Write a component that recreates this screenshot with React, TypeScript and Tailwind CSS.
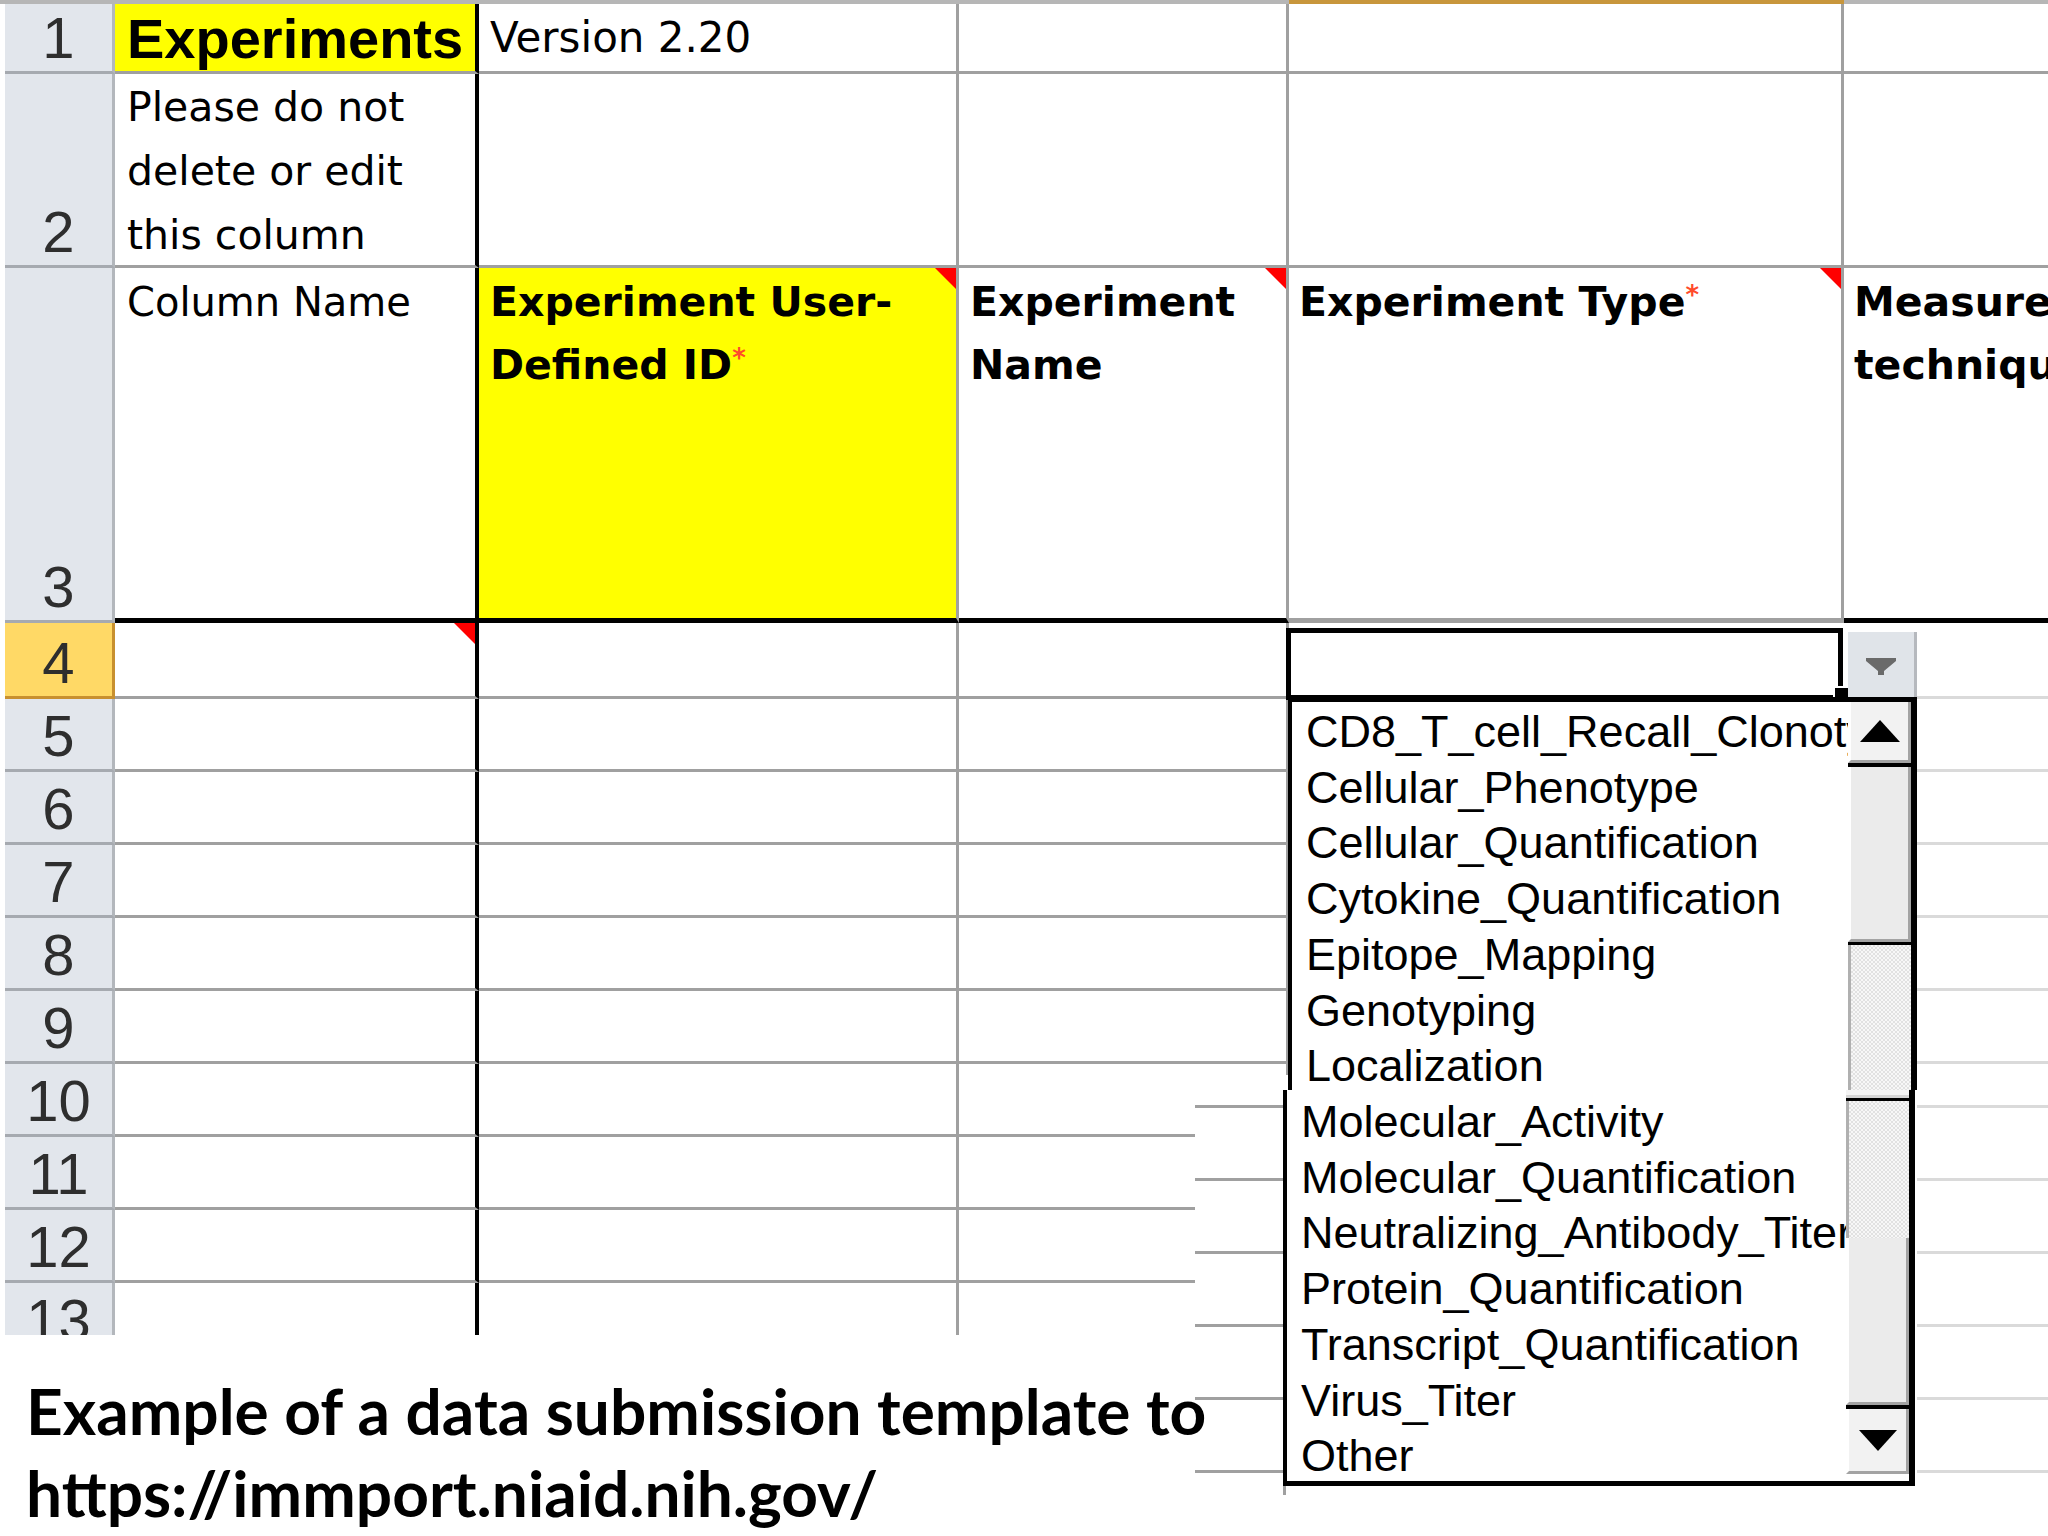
import React from "react";

const GRID = "border-[#a0a0a0]";
const CELL_FONT = "font-['DejaVu_Sans',sans-serif]";

const items = [
  "CD8_T_cell_Recall_Clonotype",
  "Cellular_Phenotype",
  "Cellular_Quantification",
  "Cytokine_Quantification",
  "Epitope_Mapping",
  "Genotyping",
  "Localization",
];

const itemsScrolled = [
  "Molecular_Activity",
  "Molecular_Quantification",
  "Neutralizing_Antibody_Titer",
  "Protein_Quantification",
  "Transcript_Quantification",
  "Virus_Titer",
  "Other",
];

function Corner() {
  return (
    <svg className="absolute right-0 top-0" width="21" height="21" viewBox="0 0 21 21">
      <polygon points="0,0 21,0 21,21" fill="#ff0000" />
    </svg>
  );
}

function Star() {
  return <span className="relative top-[-12px] text-[26px] font-bold text-[#ff4b2b]">*</span>;
}

function RowHead({ n, active }: { n: number; active?: boolean }) {
  return (
    <div
      className={
        active
          ? "flex w-[110px] shrink-0 items-end justify-center border-b-[3px] border-r-[3px] border-[#c8902f] bg-[#ffd966] pb-[4px] font-['Liberation_Sans',sans-serif] text-[58px] leading-none text-[#2e2e2e]"
          : "flex w-[110px] shrink-0 items-end justify-center border-b-[3px] border-r-[3px] border-b-[#a6aab0] border-r-[#b3b7bc] bg-[#e2e6ec] pb-[4px] font-['Liberation_Sans',sans-serif] text-[58px] leading-none text-[#2e2e2e]"
      }
    >
      {n}
    </div>
  );
}

function BodyRow({ n, active }: { n: number; active?: boolean }) {
  return (
    <div className={active ? "flex h-[76px]" : "flex h-[73px]"}>
      <div className="w-[5px] shrink-0" />
      <RowHead n={n} active={active} />
      <div className="relative w-[364px] shrink-0 border-b-[3px] border-r-4 border-b-[#a0a0a0] border-r-black">
        {active && <Corner />}
      </div>
      <div className={`w-[480px] shrink-0 border-b-[3px] border-r-[3px] ${GRID}`} />
      <div className={`w-[330px] shrink-0 border-b-[3px] border-r-[3px] ${GRID}`} />
      <div className="w-[555px] shrink-0 border-b-[3px] border-[#dadada]" />
      <div className="flex-1 border-b-[3px] border-[#dadada]" />
    </div>
  );
}

function Sheet() {
  return (
    <div className={`h-[1335px] overflow-hidden ${CELL_FONT} text-[41px] leading-[63px] text-black`}>
      {/* column header edge */}
      <div className="flex h-[4px]">
        <div className="w-[1289px] bg-[#b6b6b6]" />
        <div className="w-[555px] bg-[#c8963c]" />
        <div className="flex-1 bg-[#b6b6b6]" />
      </div>

      {/* row 1 */}
      <div className="flex h-[70px]">
        <div className="w-[5px] shrink-0" />
        <RowHead n={1} />
        <div className="w-[364px] shrink-0 border-b-[3px] border-r-4 border-b-[#a0a0a0] border-r-black bg-[#ffff00] pl-[12px] pt-[3px] font-['Liberation_Sans',sans-serif] text-[56px] font-bold leading-[64px]">
          Experiments
        </div>
        <div className={`w-[480px] shrink-0 border-b-[3px] border-r-[3px] ${GRID} pl-[11px] pt-[2px] text-[42px] leading-[64px]`}>
          Version 2.20
        </div>
        <div className={`w-[330px] shrink-0 border-b-[3px] border-r-[3px] ${GRID}`} />
        <div className={`w-[555px] shrink-0 border-b-[3px] border-r-[3px] ${GRID}`} />
        <div className={`flex-1 border-b-[3px] ${GRID}`} />
      </div>

      {/* row 2 */}
      <div className="flex h-[194px]">
        <div className="w-[5px] shrink-0" />
        <RowHead n={2} />
        <div className="w-[364px] shrink-0 border-b-[3px] border-r-4 border-b-[#a0a0a0] border-r-black pl-[12px] pt-[1px] leading-[64px]">
          Please do not
          <br />
          delete or edit
          <br />
          this column
        </div>
        <div className={`w-[480px] shrink-0 border-b-[3px] border-r-[3px] ${GRID}`} />
        <div className={`w-[330px] shrink-0 border-b-[3px] border-r-[3px] ${GRID}`} />
        <div className={`w-[555px] shrink-0 border-b-[3px] border-r-[3px] ${GRID}`} />
        <div className={`flex-1 border-b-[3px] ${GRID}`} />
      </div>

      {/* row 3 - column names */}
      <div className="flex h-[355px]">
        <div className="w-[5px] shrink-0" />
        <RowHead n={3} />
        <div className="w-[364px] shrink-0 border-b-[5px] border-r-4 border-black pl-[12px] pt-[3px] text-[40px]">
          Column Name
        </div>
        <div className="relative w-[480px] shrink-0 border-b-[5px] border-r-[3px] border-b-black border-r-[#a0a0a0] bg-[#ffff00] pl-[11px] pt-[3px] font-bold">
          Experiment User-
          <br />
          Defined ID
          <Star />
          <Corner />
        </div>
        <div className="relative w-[330px] shrink-0 border-b-[5px] border-r-[3px] border-b-black border-r-[#a0a0a0] pl-[11px] pt-[3px] font-bold">
          Experiment
          <br />
          Name
          <Corner />
        </div>
        <div className={`relative w-[555px] shrink-0 border-b-[5px] border-r-[3px] ${GRID} pl-[10px] pt-[3px] font-bold`}>
          Experiment Type
          <Star />
          <Corner />
        </div>
        <div className="flex-1 whitespace-nowrap border-b-[5px] border-black pl-[10px] pt-[3px] font-bold">
          Measurement
          <br />
          technique
        </div>
      </div>

      <BodyRow n={4} active />
      {[5, 6, 7, 8, 9, 10, 11, 12, 13].map((n) => (
        <BodyRow key={n} n={n} />
      ))}
    </div>
  );
}

function UpArrow() {
  return (
    <svg width="40" height="22" viewBox="0 0 40 22">
      <polygon points="20,0 40,22 0,22" fill="#000" />
    </svg>
  );
}

function DownArrow() {
  return (
    <svg width="38" height="21" viewBox="0 0 38 21">
      <polygon points="0,0 38,0 19,21" fill="#000" />
    </svg>
  );
}

const TRACK =
  "bg-[image:repeating-conic-gradient(#e1e1e1_0%_25%,#f7f7f7_0%_50%)] bg-[length:4px_4px] border-l-[3px] border-[#b0b0b0]";

function ListItems({ list, pad }: { list: string[]; pad: string }) {
  return (
    <div className={`flex-1 overflow-hidden whitespace-nowrap pl-[14px] ${pad} font-['Liberation_Sans',sans-serif] text-[45px] leading-[55.7px] text-black`}>
      {list.map((t) => (
        <div key={t}>{t}</div>
      ))}
    </div>
  );
}

export default function App() {
  return (
    <div className="relative h-[1536px] w-[2048px] overflow-hidden bg-white">
      <Sheet />

      {/* lower part of the second capture, scrolled list */}
      <div className="absolute left-[1195px] top-[1075px] h-[420px] w-[853px] bg-white">
        <div className="flex h-[33px]">
          <div className="w-[88px] border-b-[3px] border-[#a0a0a0]" />
          <div className="w-[634px]" />
          <div className="flex-1 border-b-[3px] border-[#dadada]" />
        </div>
        {[0, 1, 2, 3, 4].map((i) => (
          <div key={i} className="flex h-[73px]">
            <div className="w-[88px] border-b-[3px] border-[#a0a0a0]" />
            <div className="w-[634px]" />
            <div className="flex-1 border-b-[3px] border-[#dadada]" />
          </div>
        ))}
        <div className="ml-[88px] mt-[12px] h-[10px] w-[3px] bg-[#a0a0a0]" />
      </div>

      {/* selected cell D4 */}
      <div className="absolute left-[1286px] top-[628px] h-[72px] w-[557px] border-[5px] border-black">
        <div className="absolute bottom-[-6px] right-[-10px] h-[15px] w-[15px] border-l-2 border-t-2 border-white bg-black" />
      </div>

      {/* dropdown button */}
      <div className="absolute left-[1848px] top-[632px] flex h-[66px] w-[69px] justify-center border-r-[3px] border-[#b6b9be] bg-[#e0e4e9] pt-[26px]">
        <svg width="30" height="17" viewBox="0 0 30 17">
          <polygon points="0,0 30,0 30,3 18,13 18,17 12,17 12,13 0,3" fill="#6a6a6a" />
        </svg>
      </div>

      {/* validation list, first capture */}
      <div className="absolute left-[1288px] top-[697px] flex h-[393px] w-[629px] border-l-4 border-r-[6px] border-t-[5px] border-black bg-white">
        <ListItems list={items} pad="pt-[2px]" />
        <div className="flex w-[63px] shrink-0 flex-col">
          <div className="flex h-[61px] items-center justify-center border-b-[3px] border-l-[3px] border-r-[3px] border-l-white border-r-[#a3a3a3] border-b-[#a3a3a3] bg-[#f2f2f2]">
            <UpArrow />
          </div>
          <div className="h-[4px] bg-black" />
          <div className="h-[175px] border-b-[3px] border-l-[3px] border-r-[3px] border-l-white border-r-[#a3a3a3] border-b-[#a3a3a3] bg-[#ebebeb]" />
          <div className="h-[3px] bg-black" />
          <div className={`flex-1 ${TRACK}`} />
        </div>
      </div>

      {/* validation list, scrolled capture */}
      <div className="absolute left-[1283px] top-[1090px] flex h-[396px] w-[632px] border-b-[5px] border-l-4 border-r-[6px] border-black bg-white">
        <ListItems list={itemsScrolled} pad="pt-[4px]" />
        <div className="flex w-[63px] shrink-0 flex-col">
          <div className="h-[8px] border-b-[3px] border-[#d6d6d6] bg-[#f4f4f4]" />
          <div className="h-[3px] bg-black" />
          <div className={`h-[137px] ${TRACK}`} />
          <div className="h-[167px] border-b-[3px] border-l-[3px] border-r-[3px] border-l-white border-r-[#a3a3a3] border-b-[#a3a3a3] bg-[#ebebeb]" />
          <div className="h-[4px] bg-black" />
          <div className="flex h-[65px] items-center justify-center border-b-[3px] border-l-[3px] border-r-[3px] border-l-white border-r-[#a3a3a3] border-b-[#a3a3a3] bg-[#f2f2f2]">
            <DownArrow />
          </div>
          <div className="flex-1 bg-white" />
        </div>
      </div>

      {/* caption */}
      <div className="relative z-10 pl-[26px] pt-[35px] font-['Lato',sans-serif] text-[64px] font-bold leading-[82px] text-black">
        <p>Example of a data submission template to</p>
        <p>https://immport.niaid.nih.gov/</p>
      </div>
    </div>
  );
}
